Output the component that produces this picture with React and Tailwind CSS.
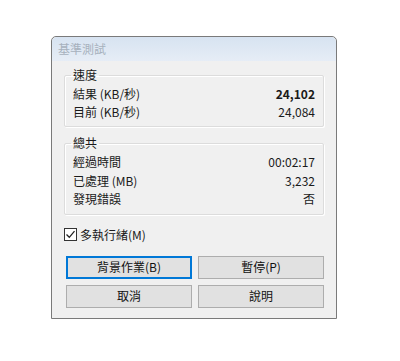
import React from 'react';

const font = { fontFamily: '"Segoe UI", "Noto Sans CJK TC", sans-serif' };

const Row = ({ label, value, bold, tall }) => (
  <div className={'flex justify-between items-center ' + (tall ? 'h-[18.5px]' : 'h-[18px]')}>
    <span>{label}</span>
    <span className={bold ? 'font-bold' : ''}>{value}</span>
  </div>
);

const Group = ({ title, children }) => (
  <fieldset className="border border-[#dcdcdc] shadow-[inset_1px_1px_0_#fff,1px_1px_0_#fff] rounded-[2px] px-[8px] pb-[5px] pt-[3px]">
    <legend className="-ml-[2px] px-[2px] leading-[14px]">{title}</legend>
    {children}
  </fieldset>
);

const Button = ({ children, focused }) => (
  <button
    className={
      'h-[23px] bg-[#e1e1e1] text-[12px] text-[#111] ' +
      (focused
        ? 'border-2 border-[#0078d7]'
        : 'border border-[#adadad]')
    }
  >
    {children}
  </button>
);

export default function App() {
  return (
    <div className="w-[400px] h-[361px] bg-white pt-[36px] pl-[51px]" style={font}>
      <div className="w-[286px] h-[283px] bg-[#f0f0f0] border border-[#7a7a7a] rounded-t-[5px] flex flex-col text-[12px] text-[#1a1a1a]">
        {/* Title bar */}
        <div className="h-[24px] rounded-t-[5px] bg-gradient-to-b from-[#d7e3f1] to-[#e6edf6] flex items-center pl-[6px] text-[#a7b1bd] text-[12px]">
          基準測試
        </div>

        <div className="flex-1 flex flex-col px-[12px] pt-[7px]">
          <Group title="速度">
            <Row label="結果 (KB/秒)" value="24,102" bold />
            <Row label="目前 (KB/秒)" value="24,084" />
          </Group>

          <div className="h-[9px]" />

          <Group title="總共">
            <Row label="經過時間" value="00:02:17" tall />
            <Row label="已處理 (MB)" value="3,232" tall />
            <Row label="發現錯誤" value="否" tall />
          </Group>

          <div className="flex items-center gap-[3px] mt-[12px] h-[16px]">
            <span className="w-[13px] h-[13px] border border-[#333] bg-white flex items-center justify-center">
              <svg width="11" height="11" viewBox="0 0 11 11">
                <path d="M1.5 5.5 L4.3 8.3 L9.5 2.2" fill="none" stroke="#222" strokeWidth="1.3" />
              </svg>
            </span>
            <span>多執行緒(M)</span>
          </div>

          <div className="grid grid-cols-2 gap-x-[6px] gap-y-[6px] mt-[13px] pl-[2px]">
            <Button focused>背景作業(B)</Button>
            <Button>暫停(P)</Button>
            <Button>取消</Button>
            <Button>說明</Button>
          </div>
        </div>
      </div>
    </div>
  );
}
